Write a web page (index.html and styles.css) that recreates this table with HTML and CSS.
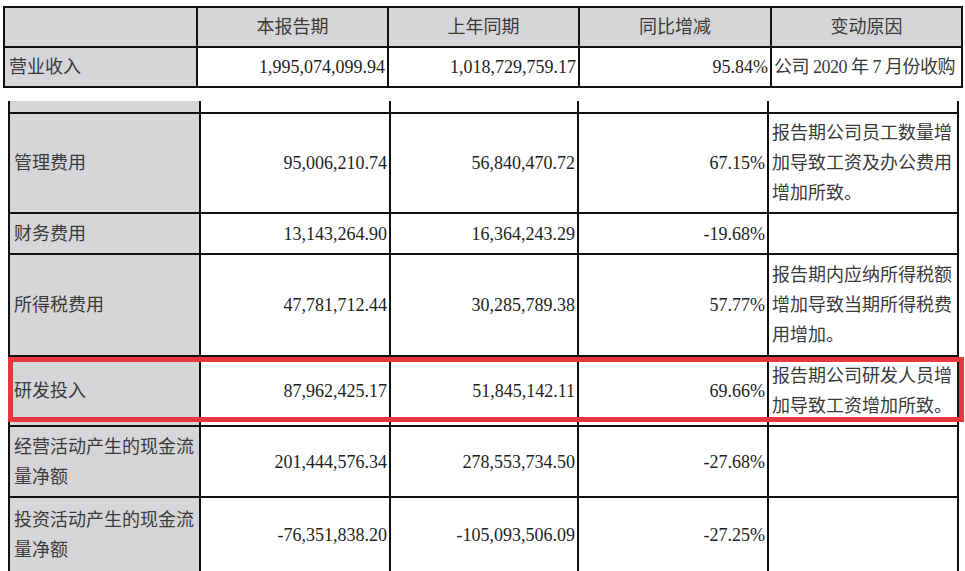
FILE: index.html
```html
<!DOCTYPE html>
<html lang="zh-CN">
<head>
<meta charset="utf-8">
<title>报表</title>
<link rel="stylesheet" href="styles.css">
</head>
<body>
<div class="page">
  <table class="tbl tbl-top">
    <colgroup>
      <col class="c1"><col class="c2"><col class="c3"><col class="c4"><col class="c5">
    </colgroup>
    <tr class="head">
      <th></th><th>本报告期</th><th>上年同期</th><th>同比增减</th><th>变动原因</th>
    </tr>
    <tr class="r40">
      <td class="label">营业收入</td>
      <td class="num">1,995,074,099.94</td>
      <td class="num">1,018,729,759.17</td>
      <td class="num">95.84%</td>
      <td class="reason tight">公司 2020 年 7 月份收购</td>
    </tr>
  </table>

  <table class="tbl tbl-main">
    <colgroup>
      <col class="d1"><col class="d2"><col class="d3"><col class="d4"><col class="d5">
    </colgroup>
    <tr class="stub">
      <td class="label"></td><td></td><td></td><td></td><td></td>
    </tr>
    <tr class="h100">
      <td class="label">管理费用</td>
      <td class="num">95,006,210.74</td>
      <td class="num">56,840,470.72</td>
      <td class="num">67.15%</td>
      <td class="reason">报告期公司员工数量增<br>加导致工资及办公费用<br>增加所致。</td>
    </tr>
    <tr class="h41">
      <td class="label">财务费用</td>
      <td class="num">13,143,264.90</td>
      <td class="num">16,364,243.29</td>
      <td class="num">-19.68%</td>
      <td class="reason"></td>
    </tr>
    <tr class="h102">
      <td class="label">所得税费用</td>
      <td class="num">47,781,712.44</td>
      <td class="num">30,285,789.38</td>
      <td class="num">57.77%</td>
      <td class="reason">报告期内应纳所得税额<br>增加导致当期所得税费<br>用增加。</td>
    </tr>
    <tr class="h70">
      <td class="label">研发投入</td>
      <td class="num">87,962,425.17</td>
      <td class="num">51,845,142.11</td>
      <td class="num">69.66%</td>
      <td class="reason">报告期公司研发人员增<br>加导致工资增加所致。</td>
    </tr>
    <tr class="h71">
      <td class="label">经营活动产生的现金流<br>量净额</td>
      <td class="num">201,444,576.34</td>
      <td class="num">278,553,734.50</td>
      <td class="num">-27.68%</td>
      <td class="reason"></td>
    </tr>
    <tr class="h74">
      <td class="label">投资活动产生的现金流<br>量净额</td>
      <td class="num">-76,351,838.20</td>
      <td class="num">-105,093,506.09</td>
      <td class="num">-27.25%</td>
      <td class="reason"></td>
    </tr>
  </table>

  <div class="highlight"></div>
</div>
</body>
</html>
```

FILE: styles.css
```css
html, body {
  margin: 0;
  padding: 0;
  background: #ffffff;
  overflow: hidden;
  height: 571px;
}

.page {
  position: relative;
  width: 965px;
  height: 571px;
  overflow: hidden;
  font-family: "Liberation Serif", "Noto Sans CJK SC", serif;
  font-size: 18px;
  color: #1e1e1e;
}

.tbl {
  border-collapse: collapse;
  table-layout: fixed;
}

.tbl td, .tbl th {
  border: 2px solid #111111;
  padding: 0;
  vertical-align: middle;
  line-height: 30px;
}

.tbl-top {
  margin: 6px 0 0 3px;
  width: 958px;
}

.tbl-top .c1 { width: 193px; }
.tbl-top .c2 { width: 191px; }
.tbl-top .c3 { width: 191px; }
.tbl-top .c4 { width: 192px; }
.tbl-top .c5 { width: 191px; }

.head th {
  height: 38px;
  background: #d6d6d8;
  font-weight: normal;
  text-align: center;
  color: #3a3a3a;
}

.r40 td { height: 38px; }

.label {
  background: #d6d6d8;
  text-align: left;
  padding-left: 4px !important;
  color: #3a3a3a;
  white-space: nowrap;
}

.num {
  text-align: right;
  padding-right: 2px !important;
}

.reason {
  text-align: left;
  padding-left: 3px !important;
  color: #3a3a3a;
  white-space: nowrap;
}

.tight {
  letter-spacing: -0.5px;
  padding-left: 2px !important;
}

.tbl-main {
  margin: 13px 0 0 8px;
  width: 949px;
}

.tbl-main .d1 { width: 191px; }
.tbl-main .d2 { width: 190px; }
.tbl-main .d3 { width: 188px; }
.tbl-main .d4 { width: 190px; }
.tbl-main .d5 { width: 190px; }

.stub td {
  height: 11px;
  border-top: none;
  line-height: 11px;
}

.h100 td { height: 98px; }
.h41 td { height: 39px; }
.h102 td { height: 100px; }
.h70 td { height: 68px; }
.h71 td { height: 69px; }
.h74 td { height: 74px; }

.highlight {
  position: absolute;
  left: 8px;
  top: 357px;
  width: 946px;
  height: 55px;
  border: 5px solid #e8383d;
  pointer-events: none;
}
```
